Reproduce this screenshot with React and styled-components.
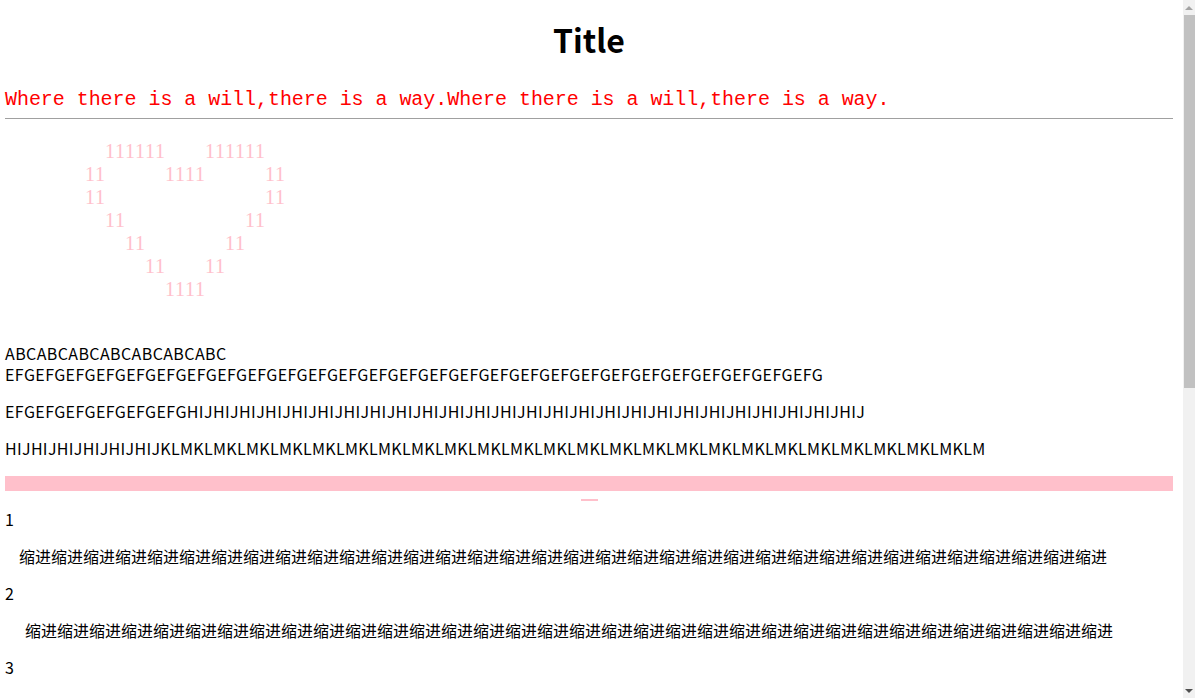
import React from "react";
import styled, { createGlobalStyle } from "styled-components";

const GlobalStyle = createGlobalStyle`
  html, body {
    margin: 0;
    padding: 0;
    overflow: hidden;
    background: #fff;
  }
  body {
    font-family: "Noto Sans CJK SC", "Noto Sans", sans-serif;
    color: #000;
  }
`;

// the page plus the window's scroll column
const Window = styled.div`
  display: flex;
  height: 100vh;
`;

const Page = styled.main`
  flex: 1;
  min-width: 0;
  overflow: hidden;
  padding: 0 5px;
`;

const Title = styled.h1`
  margin: 18px 0 0;
  font-size: 32px;
  line-height: 42px;
  font-weight: 700;
  text-align: center;
`;

const Motto = styled.p`
  margin: 28px 0 0;
  font-family: "Liberation Mono", monospace;
  font-size: 20px;
  line-height: 24px;
  letter-spacing: -0.05px;
  color: #ff0000;
  white-space: nowrap;
`;

const Rule = styled.hr`
  margin: 6px 0 0;
  border: 0;
  height: 1px;
  background: #a0a0a0;
`;

const Heart = styled.div`
  margin-top: 21px;
  font-family: "Liberation Serif", serif;
  font-size: 20px;
  line-height: 23px;
  font-kerning: none;
  color: pink;
  white-space: pre;
`;

const Para = styled.p`
  margin: ${(p) => p.$top ?? 16}px 0 0;
  padding-left: ${(p) => p.$indent ?? 0}px;
  font-size: 16px;
  line-height: 21px;
  letter-spacing: ${(p) => p.$spacing ?? 0}px;
  white-space: nowrap;
`;

const PinkBar = styled.div`
  margin-top: 17px;
  height: 15px;
  background: pink;
`;

const PinkDash = styled.div`
  margin: 8px auto 0;
  width: 17px;
  height: 2px;
  background: pink;
`;

const ScrollColumn = styled.aside`
  flex: none;
  width: 17px;
  display: flex;
  justify-content: flex-end;
`;

const Track = styled.div`
  width: 12px;
  background: #f1f1f1;
  display: flex;
  flex-direction: column;
`;

const ArrowBox = styled.div`
  height: 15px;
  display: flex;
  align-items: center;
  justify-content: center;
  margin-top: ${(p) => (p.$down ? "auto" : "0")};
`;

const Arrow = styled.span`
  width: 0;
  height: 0;
  border-left: 4px solid transparent;
  border-right: 4px solid transparent;
  ${(p) =>
    p.$down
      ? "border-top: 4px solid #505050;"
      : "border-bottom: 4px solid #a3a3a3;"}
`;

const Thumb = styled.div`
  margin-left: 1px;
  height: 373px;
  background: #c1c1c1;
`;

const sp = (n) => " ".repeat(n);

const heartRows = [
  sp(20) + "111111" + sp(8) + "111111",
  sp(16) + "11" + sp(12) + "1111" + sp(12) + "11",
  sp(16) + "11" + sp(32) + "11",
  sp(20) + "11" + sp(24) + "11",
  sp(24) + "11" + sp(16) + "11",
  sp(28) + "11" + sp(8) + "11",
  sp(32) + "1111",
];

const motto = "Where there is a will,there is a way.";
const indentText = "缩进".repeat(34);

const App = () => {
  return (
    <>
      <GlobalStyle />
      <Window>
        <Page>
          <Title>Title</Title>
          <Motto>{motto + motto}</Motto>
          <Rule />
          <Heart>{heartRows.join("\n")}</Heart>

          <Para $top={42} $spacing={0.4}>
            {"ABC".repeat(7)}
            <br />
            {"EFG".repeat(27)}
          </Para>
          <Para $spacing={0.4}>{"EFG".repeat(6) + "HIJ".repeat(26)}</Para>
          <Para $spacing={0.33}>{"HIJ".repeat(6) + "KLM".repeat(25)}</Para>

          <PinkBar />
          <PinkDash />

          <Para $top={8}>1</Para>
          <Para $indent={14}>{indentText}</Para>
          <Para>2</Para>
          <Para $indent={20}>{indentText}</Para>
          <Para>3</Para>
        </Page>

        <ScrollColumn>
          <Track>
            <ArrowBox>
              <Arrow />
            </ArrowBox>
            <Thumb />
            <ArrowBox $down>
              <Arrow $down />
            </ArrowBox>
          </Track>
        </ScrollColumn>
      </Window>
    </>
  );
};

export default App;
